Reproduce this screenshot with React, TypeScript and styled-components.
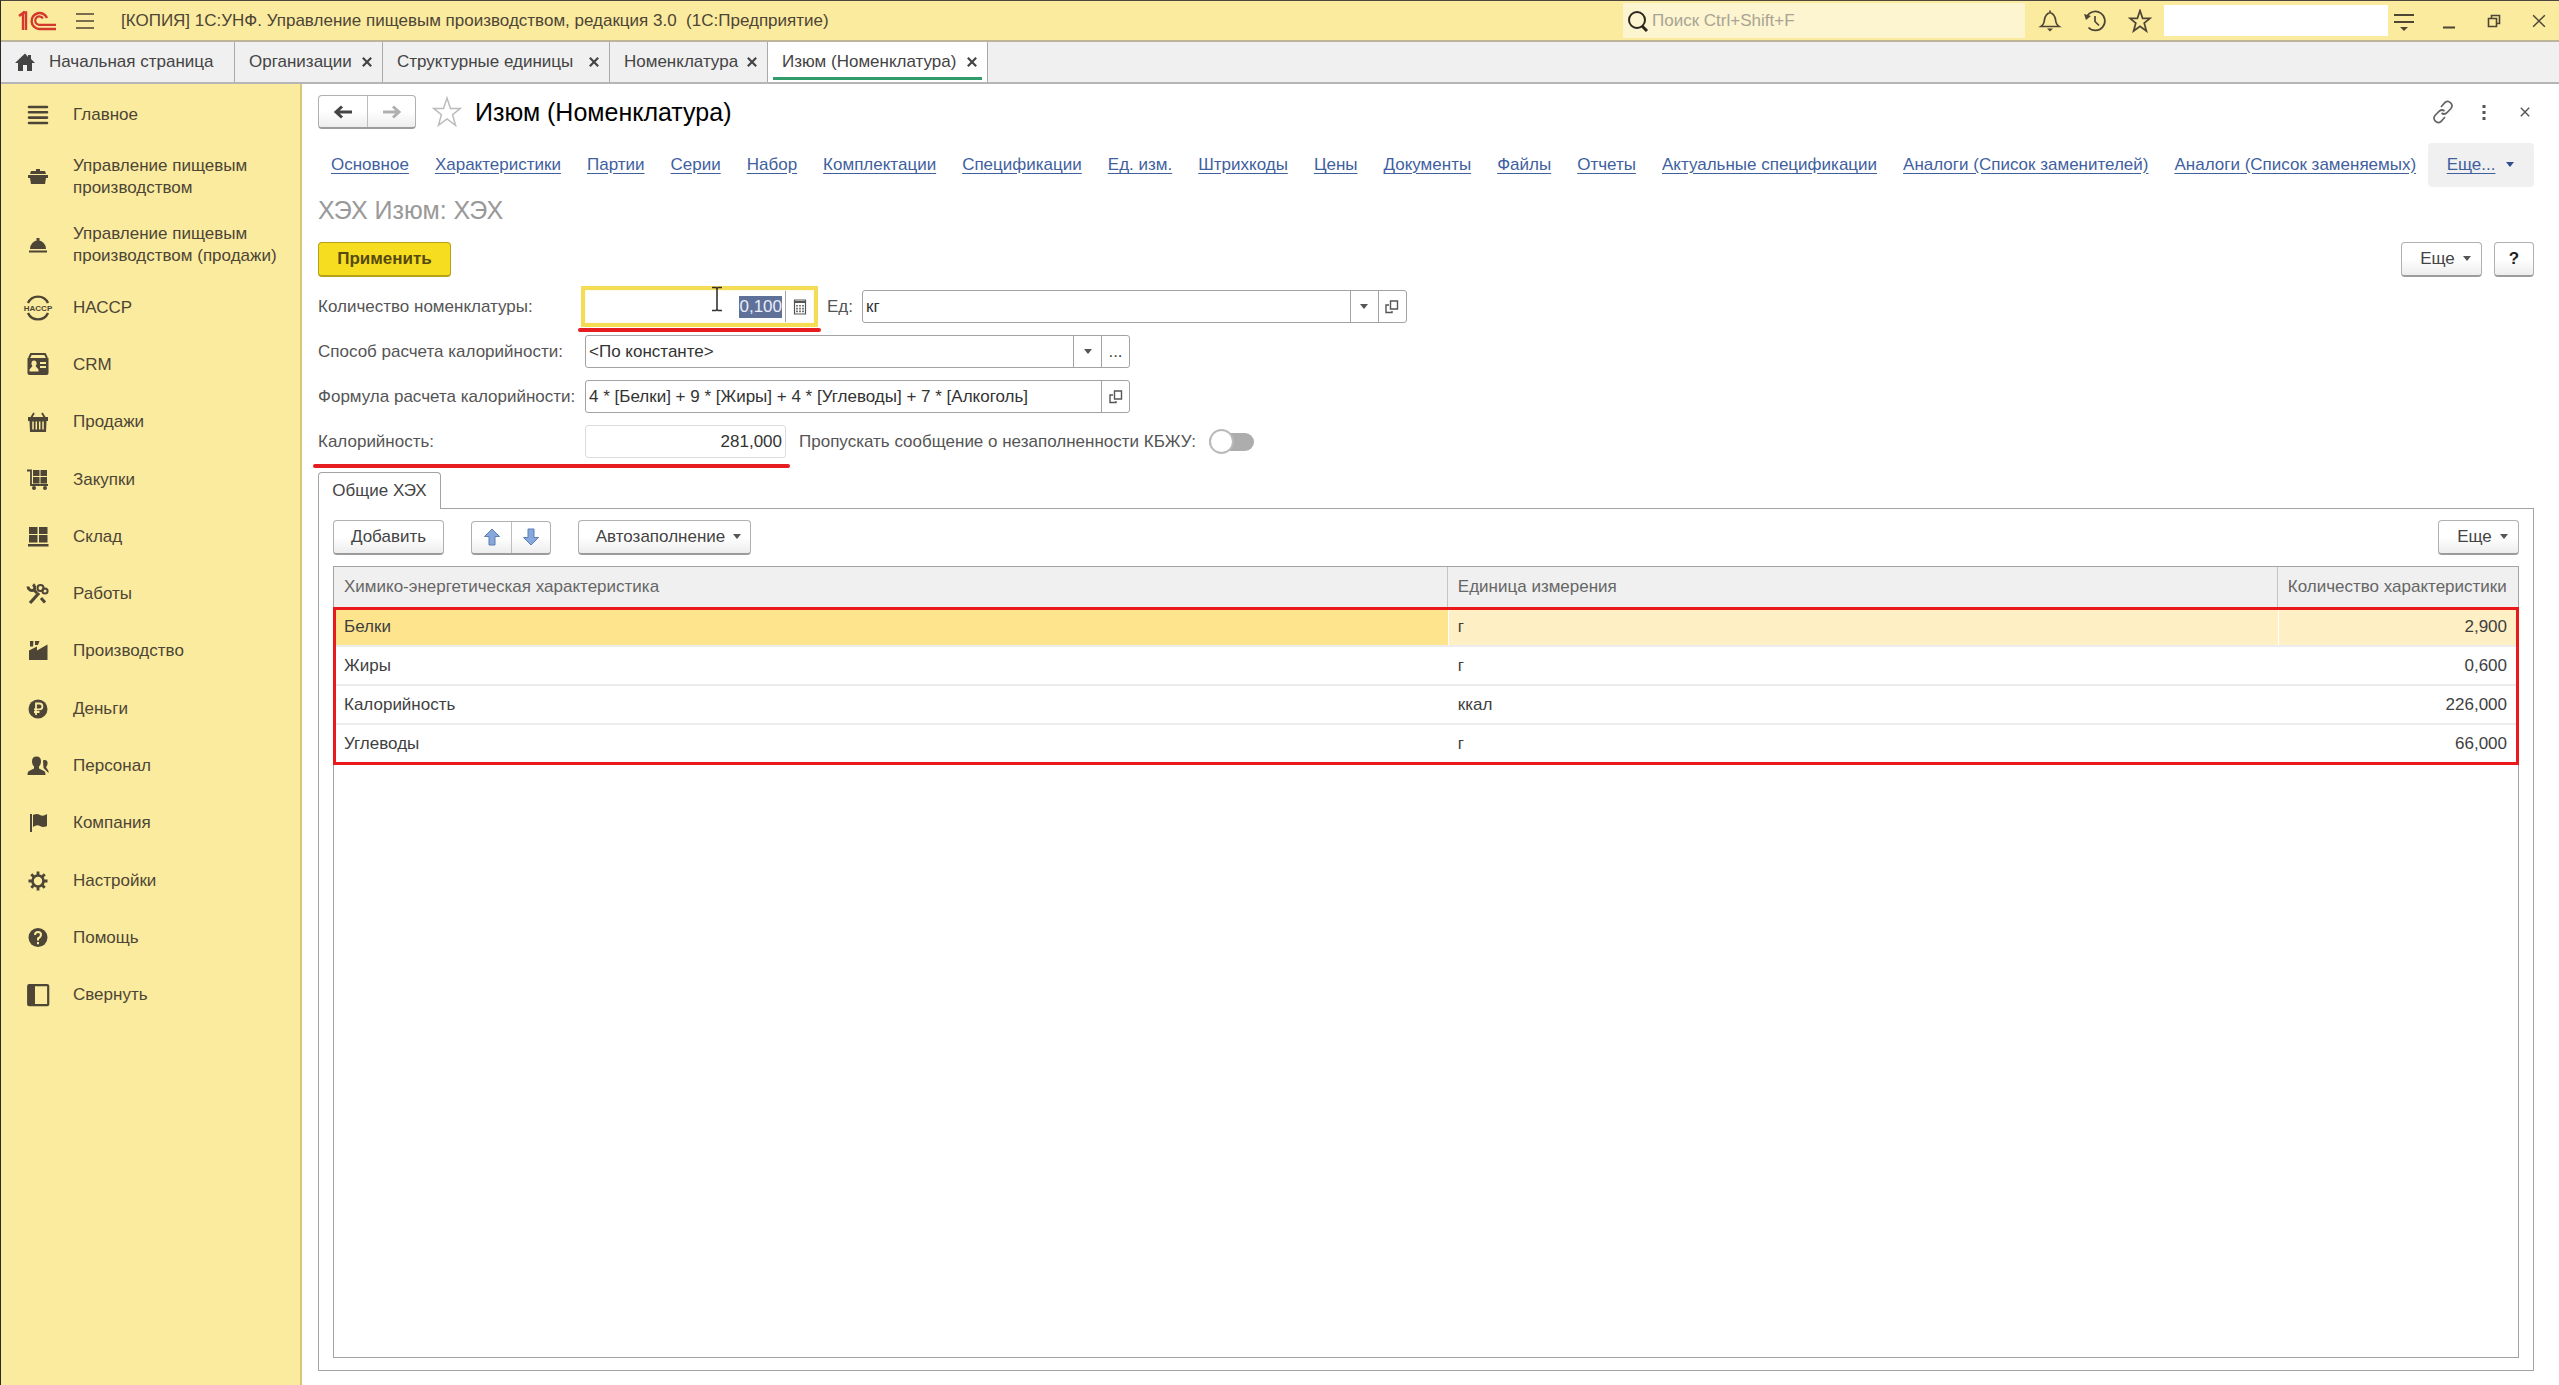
import React, { useEffect, useRef } from "react";
import styled, { createGlobalStyle, css } from "styled-components";

const ink = "#4d4536";
const line = "#a3a3a3";

const Global = createGlobalStyle`
  *, *::before, *::after { box-sizing: border-box; }
  html, body { margin: 0; background: #fff; }
  body, button, input, select, table {
    font-family: "Liberation Sans", Arial, sans-serif;
    font-size: 17px;
    line-height: 22px;
    color: #444;
  }
  button, input, select { margin: 0; padding: 0; border: 0; background: none; border-radius: 0; }
  button { display: inline-flex; align-items: center; justify-content: center; white-space: nowrap; }
  svg { display: block; flex: none; }
  h1, h2, ul { margin: 0; padding: 0; font-weight: 400; list-style: none; }
`;

const Page = styled.div`
  min-height: 100vh;
  display: flex;
  flex-direction: column;
  border-top: 1px solid #4f4640;
  border-left: 1px solid #2f2a20;
`;

/* Title bar */
const TitleBar = styled.header`
  display: flex;
  align-items: center;
  height: 41px;
  padding: 0 8px 0 16px;
  background: #fbeb9e;
  border-bottom: 2px solid #bdb49a;
`;
const AppMenu = styled.button`
  width: 20px;
  height: 24px;
  margin: 0 26px 0 18px;
`;
const AppTitle = styled.span`
  flex: 1;
  white-space: nowrap;
  color: ${ink};
`;
const Search = styled.label`
  display: flex;
  align-items: center;
  gap: 3px;
  width: 402px;
  height: 35px;
  padding-left: 4px;
  background: #fdf4d0;
`;
const SearchInput = styled.input`
  flex: 1;
  min-width: 0;
  &::placeholder { color: #a8a493; opacity: 1; }
`;
const BarTools = styled.div`
  display: flex;
  align-items: center;
  gap: 20px;
  margin: 0 12px 0 12px;
`;
const BarButton = styled.button`
  width: 25px;
  height: 28px;
`;
const UserBox = styled.div`
  width: 224px;
  height: 31px;
  background: #fff;
`;
const WindowTools = styled.div`
  display: flex;
  gap: 20px;
  margin-left: 3px;
`;

/* Open windows */
const TabBar = styled.nav`
  display: flex;
  height: 42px;
  background: #f0f0f0;
  border-bottom: 2px solid #b5b5b5;
`;
const WindowTab = styled.div<{ $width: number; $active?: boolean }>`
  display: flex;
  align-items: center;
  justify-content: space-between;
  min-width: ${(p) => p.$width}px;
  padding: 0 8px 0 14px;
  border-right: 1px solid #a9a9a9;
  white-space: nowrap;
  ${(p) =>
    p.$active &&
    css`
      background: linear-gradient(#2f9c6a, #2f9c6a) no-repeat center bottom 2px / calc(100% - 10px) 3px #fff;
    `}
`;
const HomeTab = styled(WindowTab)`
  justify-content: flex-start;
  gap: 14px;
`;
const TabClose = styled.button`
  width: 14px;
  height: 22px;
`;

/* Body */
const Body = styled.div`
  flex: 1;
  display: flex;
`;
const Sidebar = styled.nav`
  width: 301px;
  flex: none;
  padding-top: 2px;
  background: #fbeb9e;
  border-right: 2px solid #d9c47c;
`;
const SideList = styled.ul<{ $even?: boolean }>`
  display: grid;
  ${(p) =>
    p.$even &&
    css`
      grid-auto-rows: 1fr;
      height: 745px;
    `}
`;
const SideLink = styled.a`
  display: flex;
  align-items: center;
  gap: 19px;
  height: 100%;
  min-height: 57px;
  padding: 12px 10px 12px 21px;
  color: ${ink};
  text-decoration: none;
  white-space: pre-line;
`;
const Main = styled.main`
  flex: 1;
  min-width: 0;
  display: flex;
  flex-direction: column;
  padding: 12px 25px 14px 16px;
`;
const HeadRow = styled.div`
  display: flex;
  align-items: center;
  height: 32px;
`;
const raised = css`
  border: 1px solid #b0b0b0;
  border-bottom: 2px solid #9c9c9c;
  border-radius: 4px;
  background: linear-gradient(#fff 50%, #ededed);
`;
const ButtonPair = styled.div<{ $size: number }>`
  display: flex;
  height: 34px;
  ${raised}
  button { width: ${(p) => p.$size}px; }
  button + button { border-left: 1px solid #bdbdbd; }
`;
const StarButton = styled.button`
  width: 32px;
  height: 32px;
  margin: 0 12px 0 15px;
`;
const Title = styled.h1`
  flex: 1;
  font-size: 25px;
  line-height: 30px;
  color: #000;
`;
const HeadTools = styled.div`
  display: flex;
  gap: 16px;
  margin-right: -3px;
`;
const Links = styled.nav`
  display: flex;
  align-items: center;
  gap: 26px;
  height: 44px;
  margin-top: 15px;
  padding-left: 13px;
  white-space: nowrap;
`;
const PageLink = styled.a`
  color: #3f5f9f;
  text-decoration: underline;
  text-underline-offset: 3px;
`;
const MoreLink = styled.button`
  flex: none;
  align-self: stretch;
  gap: 10px;
  width: 106px;
  margin-left: -14px;
  border-radius: 4px;
  background: #f0f0f0;
  color: #3f5f9f;
  text-decoration: underline;
  text-underline-offset: 3px;
`;
const Subtitle = styled.h2`
  margin: 8px 0 17px;
  font-size: 25px;
  line-height: 30px;
  color: #999;
`;
const CommandRow = styled.div`
  display: flex;
  align-items: center;
  justify-content: space-between;
`;
const Group = styled.div<{ $gap: number }>`
  display: flex;
  align-items: center;
  gap: ${(p) => p.$gap}px;
`;
const Button = styled.button<{ $width: number }>`
  width: ${(p) => p.$width}px;
  height: 35px;
  gap: 8px;
  ${raised}
`;
const MenuButton = styled(Button)`
  padding-left: 8px;
`;
const ApplyButton = styled(Button)`
  font-weight: 700;
  color: #554a10;
  border-color: #b5a11a;
  background: #f6dd1f;
`;
const HelpButton = styled(Button)`
  font-weight: 700;
  color: #222;
`;

/* Form */
const Form = styled.form`
  display: grid;
  gap: 12px;
  margin-top: 13px;
`;
const FormRow = styled.div`
  position: relative;
  display: flex;
  align-items: center;
  height: 33px;
`;
const Label = styled.label<{ $inline?: boolean }>`
  flex: none;
  width: ${(p) => (p.$inline ? "auto" : "267px")};
  white-space: nowrap;
  color: #555;
`;
const Field = styled.div<{ $width: number; $kind?: "focus" | "readonly" }>`
  display: flex;
  width: ${(p) => p.$width}px;
  height: 33px;
  border: 1px solid ${line};
  border-radius: 3px;
  background: #fff;
  ${(p) =>
    p.$kind === "focus" &&
    css`
      border-color: #fffbe6;
      border-radius: 0;
      box-shadow: 0 0 0 4px #f5dc55;
    `}
  ${(p) => p.$kind === "readonly" && css`border-color: #dcdcdc;`}
`;
const control = css`
  flex: 1;
  min-width: 0;
  padding: 0 3px;
  outline: none;
  appearance: none;
  color: #333;
`;
const Input = styled.input<{ $right?: boolean }>`
  ${control}
  text-align: ${(p) => (p.$right ? "right" : "left")};
  &::selection { background: #5f7199; color: #e9eefb; }
`;
const Select = styled.select`
  ${control}
`;
const FieldButton = styled.button`
  width: 28px;
  border-left: 1px solid ${line};
`;
const Spacer = styled.span<{ $width: number }>`
  width: ${(p) => p.$width}px;
`;
const Switch = styled.input`
  appearance: none;
  display: flex;
  align-items: center;
  width: 45px;
  height: 18px;
  margin-left: 13px;
  border-radius: 9px;
  background: #adadad;
  &::before {
    content: "";
    width: 25px;
    height: 25px;
    border: 2px solid #bababa;
    border-radius: 50%;
    background: #fff;
  }
`;
const RedLine = styled.i<{ $left: number; $width: number; $top: number }>`
  position: absolute;
  left: ${(p) => p.$left}px;
  top: ${(p) => p.$top}px;
  width: ${(p) => p.$width}px;
  height: 4px;
  border-radius: 2px;
  background: #e51c20;
`;
const Pointer = styled.svg`
  position: absolute;
  left: 393px;
  top: -4px;
`;

/* Table part */
const PanelTab = styled.button`
  position: relative;
  z-index: 1;
  align-self: flex-start;
  width: 123px;
  height: 37px;
  margin: 14px 0 -1px;
  border: 1px solid ${line};
  border-bottom: 0;
  border-radius: 4px 4px 0 0;
  background: #fff;
`;
const Panel = styled.section`
  flex: 1;
  display: flex;
  flex-direction: column;
  padding: 11px 14px 12px;
  border: 1px solid ${line};
`;
const TableBox = styled.div`
  flex: 1;
  position: relative;
  margin-top: 11px;
  border: 1px solid ${line};
`;
const Table = styled.table`
  width: 100%;
  table-layout: fixed;
  border-collapse: separate;
  border-spacing: 0;
`;
const Th = styled.th<{ $right?: boolean }>`
  height: 41px;
  padding: 0 10px;
  background: #f0f0f0;
  border-right: 1px solid #c4c4c4;
  border-bottom: 1px solid #c4c4c4;
  font-weight: 400;
  color: #666;
  white-space: nowrap;
  text-align: ${(p) => (p.$right ? "right" : "left")};
  &:last-child { border-right: 0; padding-right: 12px; }
`;
const Td = styled.td<{ $right?: boolean }>`
  height: 39px;
  padding: 0 10px;
  border-bottom: 2px solid #ededed;
  color: #3f3f3f;
  text-align: ${(p) => (p.$right ? "right" : "left")};
  &:last-child { padding-right: 11px; }
`;
const Row = styled.tr<{ $selected?: boolean }>`
  ${(p) =>
    p.$selected &&
    css`
      td { background: #fef0c4; }
      td:first-child { background: #fee58d; }
      td + td { box-shadow: inset 1px 0 #fff; }
    `}
`;
const RedFrame = styled.i`
  position: absolute;
  left: -1px;
  right: -1px;
  top: 40px;
  height: 158px;
  border: 3px solid #e9191c;
`;

/* Icons */
const Svg = ({ size = 24, width, children }: { size?: number; width?: number; children: React.ReactNode }) => (
  <svg width={width ?? size} height={size} viewBox={`0 0 ${width ?? size} ${size}`} fill="none" stroke="none" aria-hidden>
    {children}
  </svg>
);
const Caret = ({ color = "#555", w = 8 }: { color?: string; w?: number }) => (
  <svg width={w} height="6" viewBox="0 0 8 6" aria-hidden><path d="M0 0h8L4 5z" fill={color} /></svg>
);
const Cross = ({ size, w, color = "#444" }: { size: number; w: number; color?: string }) => (
  <svg width={size} height={size} viewBox="0 0 12 12" aria-hidden>
    <path d="M1 1l10 10M11 1L1 11" stroke={color} strokeWidth={w} />
  </svg>
);
const Logo = () => (
  <svg width="40" height="22" viewBox="0 0 40 22" fill="none" stroke="#d5372c" aria-hidden>
    <path d="M2 6l4-3v17M6 2.500h3V20" strokeWidth="2.400" />
    <path d="M30 8a8 8 0 1 0-8 11h17" strokeWidth="2.400" />
    <path d="M26 8.500a4.200 4.200 0 1 0-4 6.300h17" strokeWidth="2.200" />
  </svg>
);
const Open = () => (
  <Svg size={16}>
    <path d="M6.500 2h7v8h-7zM5 6H2v7.500h6V12" stroke="#555" strokeWidth="1.400" />
  </Svg>
);
const Calc = () => (
  <Svg size={16}>
    <path d="M2.500 1h11v14h-11z" stroke="#555" strokeWidth="1.200" />
    <path d="M3 3h10" stroke="#555" strokeWidth="2" />
    <path d="M5 6v8M8 6v8M11 6v8" stroke="#555" strokeWidth="1.600" strokeDasharray="1.600 1.200" />
  </Svg>
);
const Arrow = ({ color, back }: { color: string; back?: boolean }) => (
  <Svg size={20}>
    <path d={back ? "M19 10H4M9 4.500L3 10l6 5.500" : "M1 10h15M11 4.500l6 5.500-6 5.500"} stroke={color} strokeWidth="3" />
  </Svg>
);
const BlueArrow = ({ down }: { down?: boolean }) => (
  <Svg size={18}>
    <path
      d={down ? "M9 17L1.500 9.500H6V1h6v8.500h4.500z" : "M9 1l7.500 7.500H12V17H6V8.500H1.500z"}
      fill="#86a8dc"
      stroke="#5f7fb4"
      strokeWidth="1"
    />
  </Svg>
);
const starPath = "M12 1.500l2.600 7.800H22l-5.800 4.800 2.200 7.900-6.400-4.800L5.600 22l2.200-7.900L2 9.300h7.400z";

const sideIcons: Record<string, React.ReactNode> = {
  menu: <path d="M7 8h18M7 13.300h18M7 18.600h18M7 24h18" stroke={ink} strokeWidth="2.600" strokeLinecap="round" />,
  pot: (
    <g fill={ink}>
      <path d="M14 8h4v2h-4zM9 10h14l1 3H8zM6 14h20v3h-2l-1 6H9l-1-6H6z" />
    </g>
  ),
  dish: (
    <g fill={ink}>
      <path d="M8 20a8 8.500 0 0 1 16 0zM14.500 9h3v3h-3zM7 21.500h18v2H7z" />
    </g>
  ),
  haccp: (
    <>
      <path d="M6 11a11 11 0 0 1 20 0M6 21a11 11 0 0 0 20 0" stroke={ink} strokeWidth="2.400" />
      <text x="16" y="19" textAnchor="middle" fontSize="8" fontWeight="700" fill={ink}>HACCP</text>
    </>
  ),
  card: (
    <>
      <path d="M7 9l2-4h14l2 4" stroke={ink} strokeWidth="2" />
      <path d="M5.500 9h21v15q0 2-2 2h-17q-2 0-2-2z" fill={ink} />
      <path d="M12 11.500a2.500 3 0 0 1 1.500 5.500l3 3.500v2h-9v-2l3-3.500A2.500 3 0 0 1 12 11.500zM18 13h6v2h-6zM18 17h6v2h-6z" fill="#fbeb9e" />
    </>
  ),
  basket: (
    <>
      <path d="M12 7l-3 5M20 7l3 5" stroke={ink} strokeWidth="1.800" />
      <path d="M6 11h20v4h-1.500L24 26H8l-.500-11H6z" fill={ink} />
      <path d="M11 15.500v8M14.300 15.500v8M17.700 15.500v8M21 15.500v8" stroke="#fbeb9e" strokeWidth="1.500" />
    </>
  ),
  cart: (
    <>
      <path d="M5 6.500h4V21h17" stroke={ink} strokeWidth="1.800" />
      <path d="M11 6h6.500v6H11zM18.500 6H25v6h-6.500zM11 13h6.500v6.500H11zM18.500 13H25v6.500h-6.500z" fill={ink} />
      <circle cx="12" cy="24" r="2" fill={ink} /><circle cx="23" cy="24" r="2" fill={ink} />
    </>
  ),
  stock: <path d="M7 6h8.500v7H7zM17 6h8.500v7H17zM7 14h8.500v7.500H7zM17 14h8.500v7.500H17zM6 23h20.500v2.500H6z" fill={ink} />,
  tools: (
    <>
      <path d="M8 25l9-10" stroke={ink} strokeWidth="3.200" />
      <path d="M6 8.500a4 4 0 0 0 6 3.500 4 4 0 0 0-1-5.500M12 12l3 3M19 20l4 4.500" stroke={ink} strokeWidth="3" />
      <circle cx="18.500" cy="10" r="3" stroke={ink} strokeWidth="2" />
      <circle cx="23" cy="13" r="2.600" stroke={ink} strokeWidth="2" />
    </>
  ),
  factory: <path d="M8 6h3.500l-.500 5.500H8zM13 6h4.500L16 10h-3zM7 25V15.500l8-4v4L25.500 9.500V25z" fill={ink} />,
  ruble: (
    <>
      <circle cx="16" cy="16" r="9.500" fill={ink} />
      <path d="M14 22V10.500h3.500a2.800 2.800 0 0 1 0 5.800H12M12 19h5.500" stroke="#fbeb9e" strokeWidth="1.800" />
    </>
  ),
  people: (
    <g fill={ink}>
      <path d="M14.500 6.500c3 0 4.500 2 4.500 4.800 0 2.500-1 4-2 5.200v2l5 2.500c1 .500 1.500 2 1.500 4h-18c0-2 .500-3.500 1.500-4l5-2.500v-2c-1-1.200-2-2.700-2-5.200 0-2.800 1.500-4.800 4.500-4.800z" />
      <path d="M21 10.500c3-1.500 5 .500 4.500 3.500-.200 1.500-1 2.500-1.500 3l2.500 4v2l-5-5z" />
    </g>
  ),
  flag: (
    <>
      <path d="M9 7v18" stroke={ink} strokeWidth="2" />
      <path d="M11 8q4-2 7 0t7-1v12q-4 2-7 0t-7 1z" fill={ink} />
    </>
  ),
  gear: (
    <>
      <circle cx="16" cy="16" r="5.500" stroke={ink} strokeWidth="2.600" />
      <path d="M16 6.500V10M16 22v3.500M6.500 16H10M22 16h3.500M9.300 9.300l2.400 2.400M20.300 20.300l2.400 2.400M22.700 9.300l-2.400 2.400M11.700 20.300l-2.400 2.400" stroke={ink} strokeWidth="2.800" />
    </>
  ),
  help: (
    <>
      <circle cx="16" cy="15.500" r="9.500" fill={ink} />
      <path d="M13 13q0-3 3-3t3 2.500-3 4v2M16 20v2.200" stroke="#fbeb9e" strokeWidth="2" />
    </>
  ),
  collapse: (
    <>
      <rect x="6.200" y="6.200" width="20" height="20" rx="1" stroke={ink} strokeWidth="2.200" />
      <path d="M6 6h7v20H6z" fill={ink} />
    </>
  ),
};

const topSections = [
  ["menu", "Главное"],
  ["pot", "Управление пищевым\nпроизводством"],
  ["dish", "Управление пищевым\nпроизводством (продажи)"],
];
const sections = [
  ["haccp", "НАССР"],
  ["card", "CRM"],
  ["basket", "Продажи"],
  ["cart", "Закупки"],
  ["stock", "Склад"],
  ["tools", "Работы"],
  ["factory", "Производство"],
  ["ruble", "Деньги"],
  ["people", "Персонал"],
  ["flag", "Компания"],
  ["gear", "Настройки"],
  ["help", "Помощь"],
  ["collapse", "Свернуть"],
];
const windows = [
  { title: "Организации", width: 148 },
  { title: "Структурные единицы", width: 227 },
  { title: "Номенклатура", width: 158 },
  { title: "Изюм (Номенклатура)", width: 220, active: true },
];
const links = [
  "Основное", "Характеристики", "Партии", "Серии", "Набор", "Комплектации", "Спецификации", "Ед. изм.",
  "Штрихкоды", "Цены", "Документы", "Файлы", "Отчеты", "Актуальные спецификации",
  "Аналоги (Список заменителей)", "Аналоги (Список заменяемых)",
];
const rows = [
  ["Белки", "г", "2,900"],
  ["Жиры", "г", "0,600"],
  ["Калорийность", "ккал", "226,000"],
  ["Углеводы", "г", "66,000"],
];

const SideItems = ({ items, even }: { items: string[][]; even?: boolean }) => (
  <SideList $even={even}>
    {items.map(([icon, text]) => (
      <li key={text}>
        <SideLink href="#">
          <Svg size={32}>{sideIcons[icon]}</Svg>
          <span>{text}</span>
        </SideLink>
      </li>
    ))}
  </SideList>
);

export default function App() {
  const amount = useRef<HTMLInputElement>(null);
  useEffect(() => {
    amount.current?.focus();
    amount.current?.select();
  }, []);

  return (
    <Page>
      <Global />
      <TitleBar>
        <Logo />
        <AppMenu aria-label="Меню">
          <Svg size={20}><path d="M1 3h18M1 10h18M1 17h18" stroke={ink} strokeWidth="1.600" /></Svg>
        </AppMenu>
        <AppTitle>[КОПИЯ] 1С:УНФ. Управление пищевым производством, редакция 3.0&nbsp; (1С:Предприятие)</AppTitle>
        <Search>
          <Svg size={22}>
            <circle cx="10" cy="10" r="8" stroke="#2c2820" strokeWidth="2" />
            <path d="M15 16l5 5" stroke="#2c2820" strokeWidth="3" />
          </Svg>
          <SearchInput placeholder="Поиск Ctrl+Shift+F" aria-label="Поиск" />
        </Search>
        <BarTools>
          <BarButton aria-label="Уведомления">
            <Svg size={24}>
              <path d="M3 17.500q3-2 3.500-7Q7.500 5 12 3.500 16.500 5 17.500 10.500q.500 5 3.500 7zM12 1.500v2" stroke={ink} strokeWidth="1.700" />
              <path d="M9 19.500h6l-3 3z" fill={ink} />
            </Svg>
          </BarButton>
          <BarButton aria-label="История">
            <Svg size={24}>
              <path d="M4 7.500a9.500 9.500 0 1 1 1.500 11M12 7v5.500l4 4" stroke={ink} strokeWidth="1.700" />
              <path d="M1 5l7 2-5 4z" fill={ink} />
            </Svg>
          </BarButton>
          <BarButton aria-label="Избранное">
            <Svg size={24}><path d={starPath} stroke={ink} strokeWidth="1.700" /></Svg>
          </BarButton>
        </BarTools>
        <UserBox />
        <WindowTools>
          <BarButton aria-label="Параметры">
            <Svg size={24}><path d="M2 6h20M2 13h20" stroke={ink} strokeWidth="1.800" /><path d="M8 18h8l-4 4z" fill={ink} /></Svg>
          </BarButton>
          <BarButton aria-label="Свернуть окно">
            <Svg size={24}><path d="M6 18.500h12" stroke={ink} strokeWidth="2" /></Svg>
          </BarButton>
          <BarButton aria-label="Восстановить">
            <Svg size={24}><path d="M6.500 9.500h8v8h-8zM9.500 9V6.500h8v8H15" stroke={ink} strokeWidth="1.600" /></Svg>
          </BarButton>
          <BarButton aria-label="Закрыть"><Cross size={14} w={1.3} color={ink} /></BarButton>
        </WindowTools>
      </TitleBar>

      <TabBar>
        <HomeTab $width={234}>
          <Svg size={20}><path d="M10 1.500L0 11h3v8h5v-6h4v6h5v-8h3l-4-4V3h-3v2z" fill="#444" /></Svg>
          <span>Начальная страница</span>
        </HomeTab>
        {windows.map((w) => (
          <WindowTab key={w.title} $width={w.width} $active={w.active}>
            <span>{w.title}</span>
            <TabClose aria-label={`Закрыть: ${w.title}`}><Cross size={10} w={2.6} /></TabClose>
          </WindowTab>
        ))}
      </TabBar>

      <Body>
        <Sidebar>
          <SideItems items={topSections} />
          <SideItems items={sections} even />
        </Sidebar>

        <Main>
          <HeadRow>
            <ButtonPair $size={48}>
              <button aria-label="Назад"><Arrow back color="#444" /></button>
              <button aria-label="Вперед"><Arrow color="#b0b0b0" /></button>
            </ButtonPair>
            <StarButton aria-label="В избранное">
              <svg width="32" height="32" viewBox="0 0 24 24" fill="none" aria-hidden>
                <path d={starPath} stroke="#bbb" strokeWidth="1.100" />
              </svg>
            </StarButton>
            <Title>Изюм (Номенклатура)</Title>
            <HeadTools>
              <BarButton aria-label="Ссылка">
                <Svg size={24}>
                  <path d="M10 7l4-4.500c4-3 9 2 6 6L15.500 13q-2.500 2-5 0M14 17l-4 4.500c-4 3-9-2-6-6L8.500 11q2.500-2 5 0" stroke="#666" strokeWidth="1.700" />
                </Svg>
              </BarButton>
              <BarButton aria-label="Действия">
                <Svg size={24}><path d="M12 5v3M12 11v3M12 17v3" stroke="#555" strokeWidth="3" /></Svg>
              </BarButton>
              <BarButton aria-label="Закрыть"><Cross size={10} w={1.7} color="#555" /></BarButton>
            </HeadTools>
          </HeadRow>

          <Links>
            {links.map((l) => <PageLink href="#" key={l}>{l}</PageLink>)}
            <MoreLink>Еще... <Caret color="#2f4f8f" w={10} /></MoreLink>
          </Links>
          <Subtitle>ХЭХ Изюм: ХЭХ</Subtitle>

          <CommandRow>
            <ApplyButton $width={133}>Применить</ApplyButton>
            <Group $gap={12}>
              <MenuButton $width={81}>Еще <Caret /></MenuButton>
              <HelpButton $width={40}>?</HelpButton>
            </Group>
          </CommandRow>

          <Form>
            <FormRow>
              <Label htmlFor="amount">Количество номенклатуры:</Label>
              <Field $width={229} $kind="focus">
                <Input id="amount" ref={amount} $right defaultValue="0,100" />
                <FieldButton type="button" aria-label="Калькулятор"><Calc /></FieldButton>
              </Field>
              <Spacer $width={13} />
              <Label htmlFor="unit" $inline>Ед:</Label>
              <Spacer $width={9} />
              <Field $width={545}>
                <Select id="unit"><option>кг</option></Select>
                <FieldButton type="button" aria-label="Выбрать"><Caret /></FieldButton>
                <FieldButton type="button" aria-label="Открыть"><Open /></FieldButton>
              </Field>
              <RedLine $left={260} $width={243} $top={38} />
              <Pointer width="12" height="26" viewBox="0 0 12 26" fill="none" aria-hidden>
                <path d="M1 1.500h4l1 1 1-1h4M6 2v22M1 24.500h4l1-1 1 1h4" stroke="#333" strokeWidth="1.600" />
              </Pointer>
            </FormRow>
            <FormRow>
              <Label htmlFor="method">Способ расчета калорийности:</Label>
              <Field $width={545}>
                <Select id="method"><option>&lt;По константе&gt;</option></Select>
                <FieldButton type="button" aria-label="Список"><Caret /></FieldButton>
                <FieldButton type="button">...</FieldButton>
              </Field>
            </FormRow>
            <FormRow>
              <Label htmlFor="formula">Формула расчета калорийности:</Label>
              <Field $width={545}>
                <Input id="formula" defaultValue="4 * [Белки] + 9 * [Жиры] + 4 * [Углеводы] + 7 * [Алкоголь]" />
                <FieldButton type="button" aria-label="Открыть"><Open /></FieldButton>
              </Field>
            </FormRow>
            <FormRow>
              <Label htmlFor="calories">Калорийность:</Label>
              <Field $width={201} $kind="readonly">
                <Input id="calories" $right readOnly defaultValue="281,000" />
              </Field>
              <Spacer $width={13} />
              <Label htmlFor="skip" $inline>Пропускать сообщение о незаполненности КБЖУ:</Label>
              <Switch id="skip" type="checkbox" />
              <RedLine $left={-5} $width={477} $top={39} />
            </FormRow>
          </Form>

          <PanelTab>Общие ХЭХ</PanelTab>
          <Panel>
            <CommandRow>
              <Group $gap={27}>
                <Button $width={111}>Добавить</Button>
                <ButtonPair $size={39}>
                  <button aria-label="Вверх"><BlueArrow /></button>
                  <button aria-label="Вниз"><BlueArrow down /></button>
                </ButtonPair>
                <MenuButton $width={173}>Автозаполнение <Caret /></MenuButton>
              </Group>
              <MenuButton $width={81}>Еще <Caret /></MenuButton>
            </CommandRow>
            <TableBox>
              <Table>
                <colgroup>
                  <col style={{ width: "51%" }} />
                  <col style={{ width: "38%" }} />
                  <col />
                </colgroup>
                <thead>
                  <tr>
                    <Th>Химико-энергетическая характеристика</Th>
                    <Th>Единица измерения</Th>
                    <Th $right>Количество характеристики</Th>
                  </tr>
                </thead>
                <tbody>
                  {rows.map(([name, unit, value], i) => (
                    <Row key={name} $selected={i === 0}>
                      <Td>{name}</Td>
                      <Td>{unit}</Td>
                      <Td $right>{value}</Td>
                    </Row>
                  ))}
                </tbody>
              </Table>
              <RedFrame />
            </TableBox>
          </Panel>
        </Main>
      </Body>
    </Page>
  );
}
